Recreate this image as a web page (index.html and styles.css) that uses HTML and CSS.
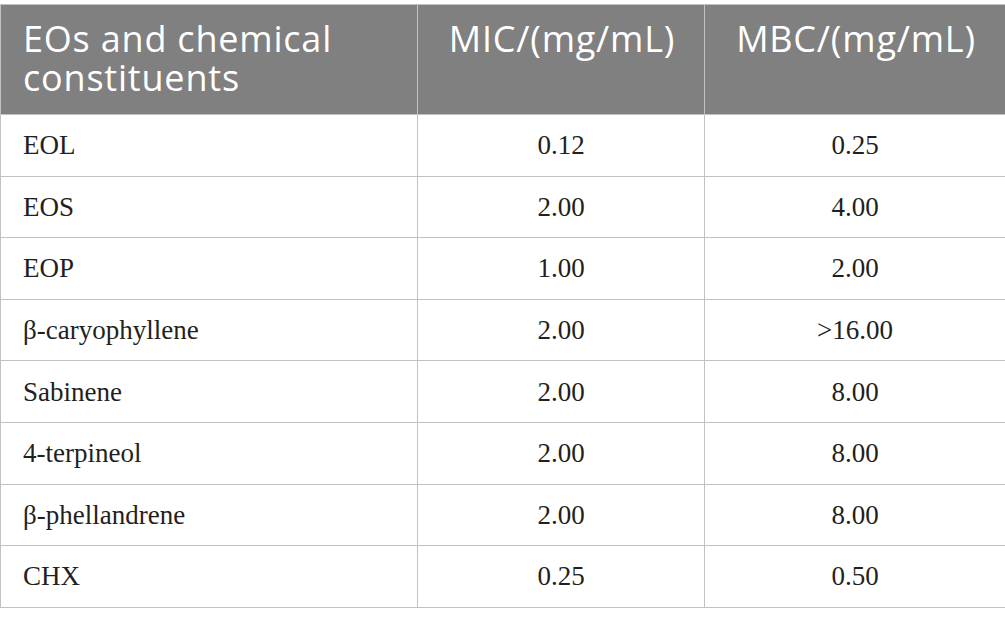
FILE: index.html
```html
<!DOCTYPE html>
<html>
<head>
<meta charset="utf-8">
<link rel="stylesheet" href="styles.css">
</head>
<body>
<table class="data">
  <colgroup>
    <col class="c1"><col class="c2"><col class="c3">
  </colgroup>
  <thead>
    <tr>
      <th class="left">EOs and chemical constituents</th>
      <th>MIC/(mg/mL)</th>
      <th>MBC/(mg/mL)</th>
    </tr>
  </thead>
  <tbody>
    <tr><td class="left">EOL</td><td>0.12</td><td>0.25</td></tr>
    <tr><td class="left">EOS</td><td>2.00</td><td>4.00</td></tr>
    <tr><td class="left">EOP</td><td>1.00</td><td>2.00</td></tr>
    <tr><td class="left">β-caryophyllene</td><td>2.00</td><td>&gt;16.00</td></tr>
    <tr><td class="left">Sabinene</td><td>2.00</td><td>8.00</td></tr>
    <tr><td class="left">4-terpineol</td><td>2.00</td><td>8.00</td></tr>
    <tr><td class="left">β-phellandrene</td><td>2.00</td><td>8.00</td></tr>
    <tr><td class="left">CHX</td><td>0.25</td><td>0.50</td></tr>
  </tbody>
</table>
</body>
</html>
```
FILE: styles.css
```css
html, body {
  margin: 0;
  padding: 0;
  background: #ffffff;
}
.data {
  margin-top: 4px;
  width: 1005px;
  border-collapse: collapse;
  table-layout: fixed;
}
.c1 { width: 417px; }
.c2 { width: 287px; }
.c3 { width: 301px; }
.data th,
.data td {
  border: 1px solid #c2c2c2;
}
.data th {
  background: #7f807f;
  color: #ffffff;
  font-family: "Open Sans", sans-serif;
  font-weight: 400;
  font-size: 36px;
  letter-spacing: 0.8px;
  line-height: 39px;
  text-align: center;
  vertical-align: top;
  padding: 14px 20px 17px 22px;
}
.data td {
  font-family: "Liberation Serif", "Times New Roman", serif;
  font-size: 27px;
  color: #231f20;
  text-align: center;
  vertical-align: middle;
  padding: 0 22px;
  height: 60.6px;
  line-height: 30px;
}
.data .left {
  text-align: left;
}
```
